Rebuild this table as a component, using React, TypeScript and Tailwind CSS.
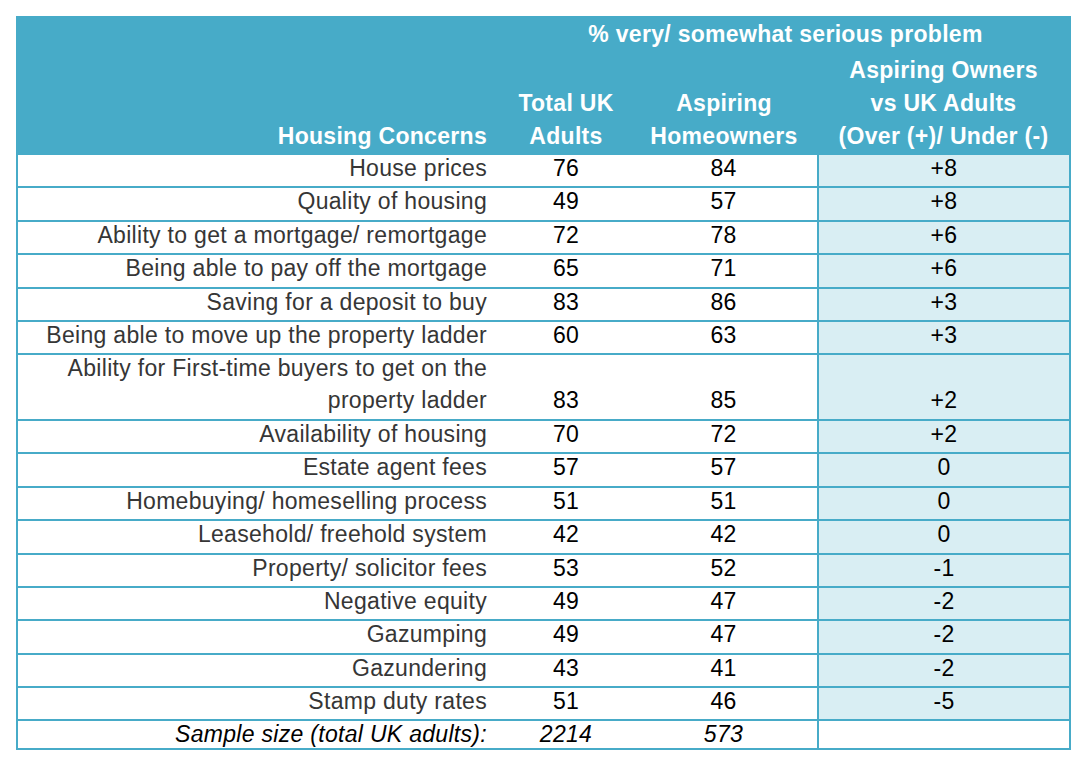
import React from 'react';

type Row = {
  label: string;
  second?: string;
  total: string;
  aspiring: string;
  diff: string;
};

const rows: Row[] = [
  { label: 'House prices', total: '76', aspiring: '84', diff: '+8' },
  { label: 'Quality of housing', total: '49', aspiring: '57', diff: '+8' },
  { label: 'Ability to get a mortgage/ remortgage', total: '72', aspiring: '78', diff: '+6' },
  { label: 'Being able to pay off the mortgage', total: '65', aspiring: '71', diff: '+6' },
  { label: 'Saving for a deposit to buy', total: '83', aspiring: '86', diff: '+3' },
  { label: 'Being able to move up the property ladder', total: '60', aspiring: '63', diff: '+3' },
  {
    label: 'Ability for First-time buyers to get on the',
    second: 'property ladder',
    total: '83',
    aspiring: '85',
    diff: '+2',
  },
  { label: 'Availability of housing', total: '70', aspiring: '72', diff: '+2' },
  { label: 'Estate agent fees', total: '57', aspiring: '57', diff: '0' },
  { label: 'Homebuying/ homeselling process', total: '51', aspiring: '51', diff: '0' },
  { label: 'Leasehold/ freehold system', total: '42', aspiring: '42', diff: '0' },
  { label: 'Property/ solicitor fees', total: '53', aspiring: '52', diff: '-1' },
  { label: 'Negative equity', total: '49', aspiring: '47', diff: '-2' },
  { label: 'Gazumping', total: '49', aspiring: '47', diff: '-2' },
  { label: 'Gazundering', total: '43', aspiring: '41', diff: '-2' },
  { label: 'Stamp duty rates', total: '51', aspiring: '46', diff: '-5' },
];

const App: React.FC = () => {
  return (
    <div className="min-h-screen bg-white pt-4 pl-4 font-['Liberation_Sans',Arial,sans-serif] text-[23px] tracking-[0.3px]">
      <table className="table-fixed border-collapse border-2 border-[#47abc8] w-[1053px]">
        <colgroup>
          <col className="w-[485px]" />
          <col className="w-[128px]" />
          <col className="w-[188px]" />
          <col className="w-[252px]" />
        </colgroup>
        <thead className="bg-[#47abc8] text-white font-bold leading-[33px]">
          <tr className="h-[32px]">
            <th rowSpan={2} className="align-bottom text-right pr-[15px] p-0 font-bold">
              Housing Concerns
            </th>
            <th colSpan={3} className="text-center font-bold align-middle p-0">
              % very/ somewhat serious problem
            </th>
          </tr>
          <tr className="h-[103px]">
            <th className="align-bottom text-center font-bold p-0">
              Total UK
              <br />
              Adults
            </th>
            <th className="align-bottom text-center font-bold p-0">
              Aspiring
              <br />
              Homeowners
            </th>
            <th className="align-bottom text-center font-bold p-0">
              Aspiring Owners
              <br />
              vs UK Adults
              <br />
              (Over (+)/ Under (-)
            </th>
          </tr>
        </thead>
        <tbody className="leading-[26px]">
          {rows.map((r, i) => {
            const tall = !!r.second;
            return (
              <tr key={i} className={`border-t-2 border-[#47abc8] ${tall ? 'h-[65.6px]' : 'h-[33.4px]'}`}>
                <td className="align-top text-right pr-[15px] text-[#363636]">
                  <div>{r.label}</div>
                  {r.second && <div className="mt-[6px]">{r.second}</div>}
                </td>
                <td className={`align-top text-center text-black ${tall ? 'pt-[32px]' : ''}`}>{r.total}</td>
                <td className={`align-top text-center text-black ${tall ? 'pt-[32px]' : ''}`}>{r.aspiring}</td>
                <td
                  className={`align-top text-center text-black bg-[#d9eef3] border-l-2 border-[#47abc8] ${
                    tall ? 'pt-[32px]' : ''
                  }`}
                >
                  {r.diff}
                </td>
              </tr>
            );
          })}
          <tr className="border-t-2 border-[#47abc8] h-[29px] italic text-black">
            <td className="align-top text-right pr-[15px]">Sample size (total UK adults):</td>
            <td className="align-top text-center">2214</td>
            <td className="align-top text-center">573</td>
            <td className="border-l-2 border-[#47abc8]"></td>
          </tr>
        </tbody>
      </table>
    </div>
  );
};

export default App;
